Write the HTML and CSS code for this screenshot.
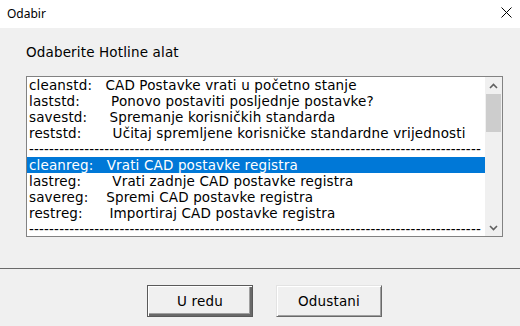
FILE: index.html
```html
<!DOCTYPE html>
<html>
<head>
<meta charset="utf-8">
<link rel="stylesheet" href="styles.css">
</head>
<body>
<div class="dialog">
  <div class="titlebar">
    <span class="title">Odabir</span>
    <svg class="close" width="11" height="11" viewBox="0 0 11 11"><path d="M0.5 0.5 L10.5 10.5 M10.5 0.5 L0.5 10.5" stroke="#000" stroke-width="1" fill="none"/></svg>
  </div>
  <div class="body">
    <div class="prompt">Odaberite Hotline alat</div>
    <div class="listbox">
      <div class="rows">
        <div class="row">cleanstd:   CAD Postavke vrati u početno stanje</div>
        <div class="row">laststd:       Ponovo postaviti posljednje postavke?</div>
        <div class="row">savestd:     Spremanje korisničkih standarda</div>
        <div class="row">reststd:       Učitaj spremljene korisničke standardne vrijednosti</div>
        <div class="row dash">------------------------------------------------------------------------------------------</div>
        <div class="row sel">cleanreg:   Vrati CAD postavke registra</div>
        <div class="row">lastreg:       Vrati zadnje CAD postavke registra</div>
        <div class="row">savereg:    Spremi CAD postavke registra</div>
        <div class="row">restreg:      Importiraj CAD postavke registra</div>
        <div class="row dash">------------------------------------------------------------------------------------------</div>
      </div>
      <div class="scrollbar">
        <div class="arrow">
          <svg width="9" height="6" viewBox="0 0 9 6"><path d="M1 5 L4.5 1.5 L8 5" stroke="#606060" stroke-width="1.6" fill="none"/></svg>
        </div>
        <div class="track"><div class="thumb"></div></div>
        <div class="arrow">
          <svg width="9" height="6" viewBox="0 0 9 6"><path d="M1 1 L4.5 4.5 L8 1" stroke="#606060" stroke-width="1.6" fill="none"/></svg>
        </div>
      </div>
    </div>
  </div>
  <div class="divider"></div>
  <div class="buttons">
    <button class="btn default">U redu</button>
    <button class="btn">Odustani</button>
  </div>
</div>
</body>
</html>
```

FILE: styles.css
```css
html, body {
  margin: 0;
  padding: 0;
  background: #f0f0f0;
}
.dialog {
  width: 520px;
  height: 326px;
  background: #f0f0f0;
  font-family: "DejaVu Sans", sans-serif;
  font-size: 13.5px;
  letter-spacing: 0.15px;
  color: #000;
  overflow: hidden;
}
.titlebar {
  height: 28px;
  background: #fff;
  display: flex;
  align-items: center;
  justify-content: space-between;
  padding: 0 8px 0 7px;
  letter-spacing: 0;
}
.title {
  font-family: "Noto Sans", sans-serif;
  font-size: 12px;
  position: relative;
  top: -1px;
}
.close {
  display: block;
  margin-top: -3px;
}
.body {
  padding: 16px 0 0 26px;
}
.prompt {
  height: 16px;
  line-height: 16px;
  margin-bottom: 16px;
}
.listbox {
  width: 475px;
  height: 159px;
  border: 1px solid #828282;
  background: #fff;
  display: flex;
}
.rows {
  flex: 1;
  overflow: hidden;
}
.row {
  height: 16px;
  line-height: 16px;
  padding-left: 2px;
  white-space: pre;
}
.row.sel {
  background: #0078d7;
  color: #fff;
}
.scrollbar {
  width: 17px;
  background: #f0f0f0;
  display: flex;
  flex-direction: column;
}
.arrow {
  height: 17px;
  display: flex;
  align-items: center;
  justify-content: center;
}
.track {
  flex: 1;
  padding: 0 1px;
}
.thumb {
  height: 38px;
  background: #cdcdcd;
}
.divider {
  margin-top: 31px;
  height: 1px;
  background: #6a6a6a;
}
.buttons {
  display: flex;
  gap: 23px;
  padding: 16px 0 0 147px;
}
.btn {
  width: 106px;
  height: 32px;
  margin: 0;
  padding: 0;
  font-family: "DejaVu Sans", sans-serif;
  font-size: 13.5px;
  letter-spacing: 0.15px;
  color: #000;
  background: #f0f0f0;
  border: 1px solid;
  border-color: #e3e3e3 #696969 #696969 #e3e3e3;
  box-shadow: inset 1px 1px 0 #fff, inset -1px -1px 0 #a0a0a0;
}
.btn.default {
  border-color: #5a5a5a;
  box-shadow: inset 1px 1px 0 #fff, inset -2px -2px 0 #696969, inset -3px -3px 0 #a0a0a0;
}
```
